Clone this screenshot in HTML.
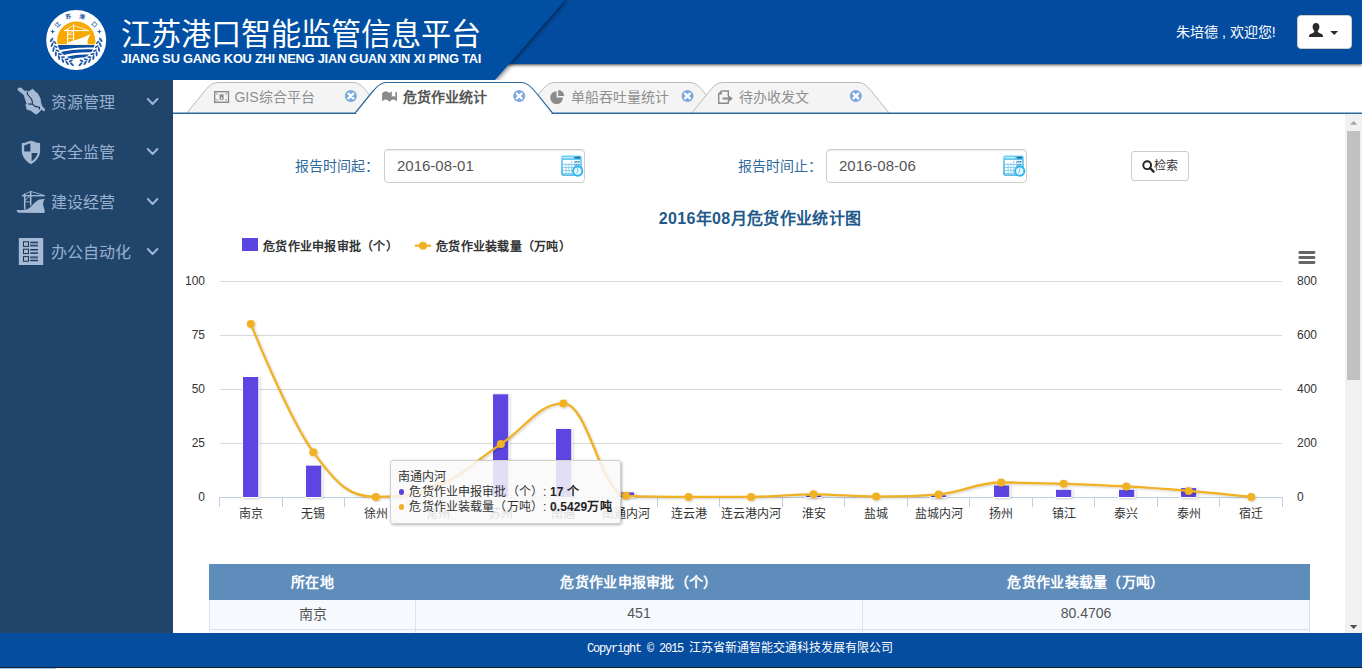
<!DOCTYPE html>
<html lang="zh-CN">
<head>
<meta charset="utf-8">
<title>江苏港口智能监管信息平台</title>
<style>
*{box-sizing:border-box;margin:0;padding:0}
html,body{width:1362px;height:669px;overflow:hidden;background:#fff;font-family:"Liberation Sans",sans-serif;font-size:14px;color:#333}
.abs{position:absolute}
#hdr-r{position:absolute;left:0;top:0;width:1362px;height:64px;background:#034c9f;box-shadow:0 1px 3px rgba(0,0,0,.75)}
#hdr-l{position:absolute;left:0;top:0;width:580px;height:80px}
#title{position:absolute;left:121px;top:14.500px;font-size:30.200px;line-height:40px;color:#fff;white-space:nowrap;letter-spacing:0}
#sub{position:absolute;left:121px;top:50.500px;font-size:12.800px;letter-spacing:-.22px;line-height:15px;font-weight:bold;color:#fff;white-space:nowrap;width:360px}
#user{position:absolute;left:1176px;top:22px;line-height:20px;font-size:14px;color:#fff;white-space:nowrap}
#ubtn{position:absolute;left:1297px;top:15px;width:55px;height:34px;background:#fff;border-radius:4px;border:1px solid #ccc}
#sidetxt{position:absolute;left:0;top:80px;width:173px;height:220px}
#side{position:absolute;left:0;top:80px;width:173px;height:553px;background:#20446a}
.mi{position:absolute;left:0;width:173px;height:50px;color:#98b0ce;font-size:16px;line-height:50px}
.mi span{position:absolute;left:51px;top:0;white-space:nowrap}
.mi svg{position:absolute}
#foot{position:absolute;left:0;top:633px;width:1362px;height:34px;background:#054d9f;color:#fff;font-size:12px;line-height:32.5px;text-align:left;padding-left:587px;font-family:"Liberation Mono",monospace;white-space:nowrap}
#foot span{letter-spacing:-1.2px;white-space:pre}
#strip{position:absolute;left:0;top:667px;width:1362px;height:2px;background:#f2f5f8;border-top:1px solid #17222e}
#strip i{position:absolute;left:0;top:0;width:56px;height:1px;background:#9cc4e4}
#sb{position:absolute;left:1345px;top:114px;width:17px;height:519px;background:#f1f1f1}
#sb .th{position:absolute;left:2px;top:17px;width:13px;height:249px;background:#c1c1c1}

#tabs{position:absolute;left:173px;top:76px;width:1189px;height:44px}
.tt{position:absolute;top:87px;height:20px;line-height:20px;font-size:14px;color:#8f8f8f;white-space:nowrap}
.tt.on{color:#555;font-weight:bold}
.lab{position:absolute;top:156px;height:20px;line-height:20px;font-size:14px;color:#2f6a9c;white-space:nowrap;text-align:right;width:90px}
.inp{position:absolute;top:149px;width:201px;height:34px;border:1px solid #ccc;border-radius:4px;background:#fff;box-shadow:inset 0 1px 1px rgba(0,0,0,.075);font-size:15px;color:#555;line-height:32px;padding-left:12px}
#sbtn{position:absolute;left:1131px;top:151px;width:58px;height:30px;border:1px solid #ccc;border-radius:3px;background:#fff;font-size:12px;color:#333;line-height:28px}
#sbtn span{position:absolute;left:22px;top:0}
#ctitle{letter-spacing:.35px;position:absolute;left:560px;width:400px;top:207.5px;height:22px;line-height:22px;text-align:center;font-size:16px;font-weight:bold;color:#1f5a8a;white-space:nowrap}
.lg{position:absolute;top:238.500px;letter-spacing:.25px;height:16px;line-height:16px;font-size:12px;font-weight:bold;color:#333;white-space:nowrap}
.yl{position:absolute;width:30px;height:14px;line-height:14px;font-size:12px;color:#333;text-align:right;left:175px}
.yr{position:absolute;width:30px;height:14px;line-height:14px;font-size:12px;color:#333;text-align:left;left:1297px}
.xl{position:absolute;top:506px;width:64px;height:16px;line-height:16px;font-size:12px;color:#333;text-align:center;white-space:nowrap}
#chart{position:absolute;left:173px;top:230px;width:1172px;height:300px}
#tip{letter-spacing:.14px;position:absolute;left:389.5px;top:460.3px;width:231.5px;height:63.4px;background:rgba(249,249,249,.85);border:1px solid #d0d0d0;border-radius:3px;box-shadow:1px 1px 3px rgba(0,0,0,.3);font-size:12px;line-height:15px;color:#333;padding:8.7px 0 0 7.5px;white-space:nowrap}
#tip b{color:#222}
#tip i{display:inline-block;width:5.4px;height:5.4px;border-radius:50%;vertical-align:middle;margin:0 5px 2px 1px}
#tbl{position:absolute;left:209px;top:564px;width:1100px;border-collapse:collapse;table-layout:fixed;font-size:14px}
#tbl th{background:#5f8dbb;border:1px solid #5f8dbb;color:#fff;font-weight:bold;height:35px;text-align:center;padding:0 0 3px 0;letter-spacing:.3px}
#tbl td{background:#f6f9fd;color:#555;height:30px;text-align:center;border:1px solid #d9e3ee;padding:0 0 3px 0}
</style>
</head>
<body>
<div id="hdr-r"></div>
<svg id="hdr-l" viewBox="0 0 580 80">
 <defs><filter id="dsh" x="-5%" y="-20%" width="115%" height="140%"><feDropShadow dx="2.5" dy="0" stdDeviation="2" flood-color="#000" flood-opacity=".5"/></filter><linearGradient id="dg" x1="0" y1="0" x2="1" y2="0"><stop offset="0" stop-color="#000" stop-opacity=".35"/><stop offset="1" stop-color="#000" stop-opacity="0"/></linearGradient></defs>
 <polygon points="0,0 565,0 495,80 0,80" fill="#054fa3" filter="url(#dsh)"/>
</svg>
<svg id="logo" class="abs" style="left:40px;top:4px" width="72" height="72" viewBox="40 4 72 72">
 <defs><clipPath id="sun"><rect x="50" y="15" width="52" height="29.2"/></clipPath><clipPath id="sea"><circle cx="76.2" cy="40.5" r="19"/></clipPath></defs>
 <circle cx="76.2" cy="40" r="30" fill="#fff"/>
 <circle cx="76.2" cy="40.500" r="19" fill="#f8a900" clip-path="url(#sun)"/>
 <path d="M66,44.300 L67.700,42.400 C75,40.800 84,37.500 91,33.800 C88.500,36.800 87.300,40.500 87.600,44.300 Z" fill="#fff"/>
 <circle cx="91.600" cy="41.600" r="3.800" fill="#f8a900" clip-path="url(#sun)"/>
 <g stroke="#fff" fill="none" stroke-linecap="square"><path d="M67.700,29 V42.400 M73.600,25 V41" stroke-width="1.100"/><path d="M64.400,30.600 H88.400" stroke-width="1"/><path d="M73.600,25.400 L88,30.400 M73.600,25.400 L65,30.400 M67.700,34.500 H73.600 M67.700,38.300 H73.600 M67.900,34.300 L73.400,30.800" stroke-width=".7"/></g>
 <g clip-path="url(#sea)" fill="#0b4ea2"><path d="M56,45 H97 V47.600 C88,47.200 72,47.600 59,50.200 L56,49Z"/><path d="M59.500,52.300 C70,49.500 84,48.800 95,49.600 L93.500,52.400 C84,51.800 72,52.600 62,55.600Z"/><path d="M64.500,57.600 C72,54.800 82,54.200 91.500,54.800 L89,57.400 C82,57 74,57.800 68.500,60.300Z"/><path d="M73,61.400 C77,59.800 81,59.400 86,59.400 L82,61.600 C79,61.600 77.500,62 75.500,62.800Z"/></g>
 <g fill="#1d57a8"><ellipse cx="71.9" cy="64.2" rx="2.6" ry="1" transform="rotate(225 71.9 64.2)"/><ellipse cx="70.8" cy="60.9" rx="2.2" ry=".9" transform="rotate(155 70.8 60.9)"/><ellipse cx="67.2" cy="62.9" rx="2.6" ry="1" transform="rotate(236 67.2 62.9)"/><ellipse cx="66.7" cy="59.4" rx="2.2" ry=".9" transform="rotate(166 66.7 59.4)"/><ellipse cx="62.8" cy="60.6" rx="2.6" ry="1" transform="rotate(248 62.8 60.6)"/><ellipse cx="63.0" cy="57.1" rx="2.2" ry=".9" transform="rotate(178 63.0 57.1)"/><ellipse cx="59.0" cy="57.5" rx="2.6" ry="1" transform="rotate(260 59.0 57.5)"/><ellipse cx="59.9" cy="54.1" rx="2.2" ry=".9" transform="rotate(190 59.9 54.1)"/><ellipse cx="55.8" cy="53.8" rx="2.6" ry="1" transform="rotate(271 55.8 53.8)"/><ellipse cx="57.4" cy="50.6" rx="2.2" ry=".9" transform="rotate(201 57.4 50.6)"/><ellipse cx="53.5" cy="49.4" rx="2.6" ry="1" transform="rotate(282 53.5 49.4)"/><ellipse cx="55.6" cy="46.6" rx="2.2" ry=".9" transform="rotate(212 55.6 46.6)"/><ellipse cx="52.1" cy="44.7" rx="2.6" ry="1" transform="rotate(294 52.1 44.7)"/><ellipse cx="54.7" cy="42.4" rx="2.2" ry=".9" transform="rotate(224 54.7 42.4)"/><ellipse cx="51.6" cy="39.8" rx="2.6" ry="1" transform="rotate(306 51.6 39.8)"/><ellipse cx="80.5" cy="64.2" rx="2.6" ry="1" transform="rotate(-45 80.5 64.2)"/><ellipse cx="81.6" cy="60.9" rx="2.2" ry=".9" transform="rotate(25 81.6 60.9)"/><ellipse cx="85.2" cy="62.9" rx="2.6" ry="1" transform="rotate(-56 85.2 62.9)"/><ellipse cx="85.7" cy="59.4" rx="2.2" ry=".9" transform="rotate(14 85.7 59.4)"/><ellipse cx="89.6" cy="60.6" rx="2.6" ry="1" transform="rotate(-68 89.6 60.6)"/><ellipse cx="89.4" cy="57.1" rx="2.2" ry=".9" transform="rotate(2 89.4 57.1)"/><ellipse cx="93.4" cy="57.5" rx="2.6" ry="1" transform="rotate(-80 93.4 57.5)"/><ellipse cx="92.5" cy="54.1" rx="2.2" ry=".9" transform="rotate(-10 92.5 54.1)"/><ellipse cx="96.6" cy="53.8" rx="2.6" ry="1" transform="rotate(-91 96.6 53.8)"/><ellipse cx="95.0" cy="50.6" rx="2.2" ry=".9" transform="rotate(-21 95.0 50.6)"/><ellipse cx="98.9" cy="49.4" rx="2.6" ry="1" transform="rotate(-102 98.9 49.4)"/><ellipse cx="96.8" cy="46.6" rx="2.2" ry=".9" transform="rotate(-32 96.8 46.6)"/><ellipse cx="100.3" cy="44.7" rx="2.6" ry="1" transform="rotate(-114 100.3 44.7)"/><ellipse cx="97.7" cy="42.4" rx="2.2" ry=".9" transform="rotate(-44 97.7 42.4)"/><ellipse cx="100.8" cy="39.8" rx="2.6" ry="1" transform="rotate(-126 100.8 39.8)"/></g>
 <g fill="#1d57a8" font-size="5.500" font-weight="bold" text-anchor="middle" font-family="Liberation Sans, sans-serif"><text transform="translate(59.300,26.300) rotate(-42)">江</text><text transform="translate(69.300,18.500) rotate(-14)">苏</text><text transform="translate(82,18.300) rotate(13)">港</text><text transform="translate(93.200,26) rotate(42)">口</text><polygon points="52.7,29.1 53.3,31.1 55.3,31.7 53.3,32.3 52.7,34.3 52.1,32.3 50.1,31.7 52.1,31.1"/><polygon points="99.3,29.1 99.9,31.1 101.9,31.7 99.9,32.3 99.3,34.3 98.7,32.3 96.7,31.7 98.7,31.1"/></g>
</svg>
<div id="title">江苏港口智能监管信息平台</div>
<div id="sub">JIANG SU GANG KOU ZHI NENG JIAN GUAN XIN XI PING TAI</div>
<div id="user">朱培德 , 欢迎您!</div>
<div id="ubtn"><svg class="abs" style="left:-2.2px;top:-2.2px" width="55" height="34" viewBox="1297 15 55 34"><path d="M1317,23.9 c2.1,0 3.4,1.6 3.4,3.8 c0,1.6 -.6,3.2 -1.6,4 v1.2 c.2,.6 3.2,1.6 4.2,2.4 c.8,.6 1.1,1.6 1.1,2.7 h-14.2 c0,-1.100 .3,-2.100 1.100,-2.700 c1,-.8 4,-1.800 4.200,-2.400 v-1.200 c-1,-.8 -1.600,-2.400 -1.600,-4 c0,-2.200 1.300,-3.800 3.400,-3.800z" fill="#2b2b2b"/><path d="M1331.300,32 h7.800 l-3.900,4z" fill="#2b2b2b"/></svg></div>

<div id="side"></div>
<svg class="abs" style="left:0;top:80px" width="173" height="200" viewBox="0 80 173 200">
 <g fill="none" stroke="#9db5d3" stroke-width="2" stroke-linecap="round" stroke-linejoin="round">
  <path d="M147.8,99 L152.6,104 L157.4,99"/><path d="M147.8,149 L152.6,154 L157.4,149"/><path d="M147.8,199 L152.6,204 L157.4,199"/><path d="M147.8,249 L152.6,254 L157.4,249"/>
 </g>
 <!-- map -->
 <path d="M18,88.3 L21.4,88 L24.2,91.1 L27,91.1 L28.8,91.7 L32.7,89.1 L34.4,91.1 L37.8,93.9 L40.1,98.5 L41,103.6 L41.8,105.9 L44.7,109.3 L44.4,111 L41.3,109.3 L40.1,111 L36.7,114.1 L34.4,113.3 L31,110.4 L27,109.3 L25.9,104.7 L27,103.6 L25.3,99 L24.2,95.1 L21.4,92.8 L18,90 Z" fill="#a5bad4" stroke="#a5bad4" stroke-width=".8" stroke-linejoin="round"/>
 <path d="M27,91.6 L27.6,94.5 L31,98.5 L32.2,100.8 L32.4,104.2 L35,106.4 L39.5,107.3 L39.5,109.6 M28.2,103.9 L32.4,104.2" fill="none" stroke="#16304d" stroke-width="1.1" stroke-linejoin="round"/>
 <!-- shield -->
 <path d="M31,140.8 C34,141.2 37,143.6 40.1,143 L40.1,151 C40.1,157 35.2,162 31,164.2 C26.8,162 21.8,157 21.8,151 L21.8,143 C25,143.6 28,141.2 31,140.8 Z" fill="#a5bad4"/>
 <path d="M24.2,145.6 L30.4,143.3 L30.4,151.6 L24.2,151.6 Z" fill="#20446a"/>
 <path d="M31.6,152.9 L37.7,152.9 C37,156.5 34.4,159.4 31.6,161.3 Z" fill="#20446a"/>
 <!-- ship with crane -->
 <path d="M16.8,210.1 C21,210.2 24,210.2 27,209.3 C30,208.3 32,205.6 33.9,203.6 C35.6,201.8 37.4,200.4 39.5,199.6 C41.3,199 43,198.8 44.7,199 C43.4,201 42.8,203 43.2,204.7 C43.4,207.2 44.6,209.4 44.9,211.5 L44.1,213 L18.5,212.7 L16.8,211.2 Z" fill="#a5bad4"/>
 <g stroke="#a5bad4" fill="none"><path d="M24.7,193.4 V209.6 M30.7,191 V205.6" stroke-width="1.5"/><path d="M21.9,195.7 H44.9" stroke-width="1.3"/><path d="M30.7,191.4 L44.1,195.4 M30.7,191.4 L22.2,195.6 M24.7,201.9 H30.7 M24.7,200.6 L29.6,196.2" stroke-width=".9"/></g>
 <!-- list -->
 <rect x="18.8" y="238" width="24.4" height="27" fill="#a5bad4"/>
 <g fill="none" stroke="#1b3452" stroke-width="1"><rect x="23.5" y="241.8" width="5" height="4.6"/><rect x="23.5" y="249.2" width="5" height="4.4"/><rect x="23.5" y="256.6" width="5" height="4.6"/></g>
 <g fill="#1b3452"><rect x="30.2" y="241.7" width="7.7" height="1.2"/><rect x="30.2" y="245.2" width="7.7" height="1.2"/><rect x="30.2" y="249" width="7.7" height="1.4"/><rect x="30.2" y="252.4" width="7.7" height="1.4"/><rect x="30.2" y="256.5" width="7.7" height="1.2"/><rect x="30.2" y="260" width="7.7" height="1.2"/></g>
 <g fill="#6f88a6"><rect x="30.2" y="243.3" width="7.7" height="1.5"/><rect x="30.2" y="258.1" width="7.7" height="1.5"/></g>
</svg>
<div id="sidetxt">
 <div class="mi" style="top:-2.5px"><span>资源管理</span></div>
 <div class="mi" style="top:47.5px"><span>安全监管</span></div>
 <div class="mi" style="top:97.5px"><span>建设经营</span></div>
 <div class="mi" style="top:147.5px"><span>办公自动化</span></div>
</div>

<svg id="tabs" viewBox="173 76 1189 44">
 <path d="M186.9,113 L203.9,92 C207.9,87 211.9,82.5 217.9,82.5 H353.2 C359.2,82.5 363.2,87 367.2,92 L384.2,113" fill="#f4f4f4" stroke="#b9b9b9" stroke-width="1"/>
 <path d="M523.5,113 L540.5,92 C544.5,87 548.5,82.5 554.5,82.5 H689.8 C695.8,82.5 699.8,87 703.8,92 L720.8,113" fill="#f4f4f4" stroke="#b9b9b9" stroke-width="1"/>
 <path d="M691.8,113 L708.8,92 C712.8,87 716.8,82.5 722.8,82.5 H858.1 C864.1,82.5 868.1,87 872.1,92 L889.1,113" fill="#f4f4f4" stroke="#b9b9b9" stroke-width="1"/>
 <rect x="173" y="112.5" width="1189" height="1.5" fill="#2a6a9f"/>
 <path d="M355.2,113 L372.2,92 C376.2,87 380.2,82.5 386.2,82.5 H521.5 C527.5,82.5 531.5,87 535.5,92 L552.5,113" fill="#fff" stroke="#2a6a9f" stroke-width="1.2"/>
 <rect x="356.4" y="112.4" width="194.9" height="2" fill="#fff"/>
 <circle cx="350.9" cy="96" r="6" fill="#7ba8de"/><path d="M348.5,93.6 L353.29999999999995,98.4 M353.29999999999995,93.6 L348.5,98.4" stroke="#fff" stroke-width="2.2" stroke-linecap="round" fill="none"/>
 <circle cx="519.2" cy="96" r="6" fill="#7ba8de"/><path d="M516.8000000000001,93.6 L521.6,98.4 M521.6,93.6 L516.8000000000001,98.4" stroke="#fff" stroke-width="2.2" stroke-linecap="round" fill="none"/>
 <circle cx="687.5" cy="96" r="6" fill="#7ba8de"/><path d="M685.1,93.6 L689.9,98.4 M689.9,93.6 L685.1,98.4" stroke="#fff" stroke-width="2.2" stroke-linecap="round" fill="none"/>
 <circle cx="855.8" cy="96" r="6" fill="#7ba8de"/><path d="M853.4,93.6 L858.1999999999999,98.4 M858.1999999999999,93.6 L853.4,98.4" stroke="#fff" stroke-width="2.2" stroke-linecap="round" fill="none"/>
 <g fill="none" stroke="#8a8a8a"><rect x="214.7" y="91.7" width="13.8" height="10.6" stroke-width="1.4"/></g>
 <rect x="219.6" y="94.3" width="4" height="5.4" fill="#8a8a8a"/><rect x="221" y="97.3" width="1.3" height="1.5" fill="#fff"/>
 <g fill="#9a9a9a"><rect x="216.3" y="93.3" width="1.5" height="1.3"/><rect x="225.4" y="93.3" width="1.5" height="1.3"/><rect x="216.3" y="99.4" width="1.5" height="1.3"/><rect x="225.4" y="99.4" width="1.5" height="1.3"/></g>
 <path d="M382.1,93.3 Q385.7,89.4 389.5,93 L389.5,101.8 Q385.7,97.4 382.1,101.4 Z M389.5,93 L391.8,91.2 L391.8,96.8 L393.6,95.9 L395.4,96.8 L395.4,91.2 L397,92.6 L397,101.4 Q393.3,97.4 389.5,101.8 Z" fill="#8a8a8a"/>
 <path d="M556.6,97.6 V91.2 A6.4,6.4 0 1 0 563,97.6 Z" fill="#8a8a8a"/><path d="M558.2,96 V90 A6,6 0 0 1 564.2,96 Z" fill="#8a8a8a"/>
 <path d="M721.6,91 H728.3 V96.2 M728.3,100.6 V103.2 H718.7 V94 L721.6,91" fill="none" stroke="#8a8a8a" stroke-width="1.4"/><path d="M718.4,94.4 h3.4 v-3.6z" fill="#8a8a8a"/><path d="M722.6,97.6 h5.6 v-2.6 l4.6,3.6 -4.6,3.6 v-2.6 h-5.6z" fill="#8a8a8a"/>
</svg>
<div class="tt" style="left:234.4px">GIS综合平台</div>
<div class="tt on" style="left:402.7px">危货作业统计</div>
<div class="tt" style="left:571.0px">单船吞吐量统计</div>
<div class="tt" style="left:739.3px">待办收发文</div>

<div class="lab" style="left:289px">报告时间起：</div>
<div class="inp" style="left:384px">2016-08-01</div>
<div class="lab" style="left:732px">报告时间止：</div>
<div class="inp" style="left:826px">2016-08-06</div>
<svg class="abs" style="left:560.0px;top:154px" width="25" height="25" viewBox="560 154 25 25">
 <defs><linearGradient id="cg561" x1="0" y1="0" x2="0" y2="1"><stop offset="0" stop-color="#6fd0f5"/><stop offset="1" stop-color="#2aa6e2"/></linearGradient></defs>
 <rect x="561.2" y="155.600" width="20.600" height="20.200" rx="2" fill="url(#cg561)"/>
 <rect x="562.600" y="157" width="10.500" height="1.300" fill="#bfeaf9"/><rect x="574.600" y="156.800" width="5.800" height="1.700" rx=".8" fill="#14699e"/>
 <rect x="562.800" y="160" width="17.400" height="14.400" fill="#fff"/>
 <g fill="#8fd0ee"><rect x="562.800" y="164" width="17.400" height="1"/><rect x="562.800" y="167" width="17.400" height="1"/><rect x="562.800" y="170" width="17.400" height="1"/><rect x="562.800" y="173" width="17.400" height="1"/><rect x="565.600" y="163" width="1" height="11.400"/><rect x="568.400" y="163" width="1" height="11.400"/><rect x="571.200" y="160.800" width="1" height="13.600"/><rect x="574" y="160.800" width="1" height="13.600"/><rect x="576.800" y="160.800" width="1" height="13.600"/></g>
 <g fill="#2a86c4"><rect x="575.200" y="161" width="1.600" height="1.600"/><rect x="577.900" y="161" width="1.600" height="1.600"/><rect x="575.200" y="164.200" width="1.600" height="1.400"/><rect x="577.900" y="164.200" width="1.600" height="1.400"/></g>
 <circle cx="577.700" cy="171.100" r="5.600" fill="#2fb4ee"/><circle cx="577.700" cy="171.100" r="3.700" fill="#e6f6fd"/><path d="M577.700,168.300 V171.300 L576.300,173" stroke="#4dbdf0" stroke-width=".9" fill="none"/>
</svg>
<svg class="abs" style="left:1002.2px;top:154px" width="25" height="25" viewBox="560 154 25 25">
 <defs><linearGradient id="cg1003" x1="0" y1="0" x2="0" y2="1"><stop offset="0" stop-color="#6fd0f5"/><stop offset="1" stop-color="#2aa6e2"/></linearGradient></defs>
 <rect x="561.2" y="155.600" width="20.600" height="20.200" rx="2" fill="url(#cg1003)"/>
 <rect x="562.600" y="157" width="10.500" height="1.300" fill="#bfeaf9"/><rect x="574.600" y="156.800" width="5.800" height="1.700" rx=".8" fill="#14699e"/>
 <rect x="562.800" y="160" width="17.400" height="14.400" fill="#fff"/>
 <g fill="#8fd0ee"><rect x="562.800" y="164" width="17.400" height="1"/><rect x="562.800" y="167" width="17.400" height="1"/><rect x="562.800" y="170" width="17.400" height="1"/><rect x="562.800" y="173" width="17.400" height="1"/><rect x="565.600" y="163" width="1" height="11.400"/><rect x="568.400" y="163" width="1" height="11.400"/><rect x="571.200" y="160.800" width="1" height="13.600"/><rect x="574" y="160.800" width="1" height="13.600"/><rect x="576.800" y="160.800" width="1" height="13.600"/></g>
 <g fill="#2a86c4"><rect x="575.200" y="161" width="1.600" height="1.600"/><rect x="577.900" y="161" width="1.600" height="1.600"/><rect x="575.200" y="164.200" width="1.600" height="1.400"/><rect x="577.900" y="164.200" width="1.600" height="1.400"/></g>
 <circle cx="577.700" cy="171.100" r="5.600" fill="#2fb4ee"/><circle cx="577.700" cy="171.100" r="3.700" fill="#e6f6fd"/><path d="M577.700,168.300 V171.300 L576.300,173" stroke="#4dbdf0" stroke-width=".9" fill="none"/>
</svg>
<div id="sbtn"><svg class="abs" style="left:10px;top:8px" width="13" height="13" viewBox="0 0 13 13"><circle cx="5.2" cy="5.2" r="3.9" fill="none" stroke="#222" stroke-width="1.9"/><path d="M8,8 L11.6,11.6" stroke="#222" stroke-width="2.3" stroke-linecap="round"/></svg><span>检索</span></div>
<div id="ctitle">2016年08月危货作业统计图</div>
<!--CHART-START-->
<svg id="chart" viewBox="173 230 1172 300">
 <defs><filter id="sh" x="-5%" y="-20%" width="110%" height="140%"><feDropShadow dx="1" dy="1" stdDeviation="0.9" flood-color="#000" flood-opacity=".2"/></filter></defs>
 <rect x="220" y="281" width="1062" height="1" fill="#d8d8d8"/>
 <rect x="220" y="335" width="1062" height="1" fill="#d8d8d8"/>
 <rect x="220" y="389" width="1062" height="1" fill="#d8d8d8"/>
 <rect x="220" y="443" width="1062" height="1" fill="#d8d8d8"/>
 <rect x="219" y="497" width="1064" height="1" fill="#c0d0e0"/>
 <rect x="219" y="497" width="1" height="10" fill="#c0d0e0"/>
 <rect x="282" y="497" width="1" height="10" fill="#c0d0e0"/>
 <rect x="344" y="497" width="1" height="10" fill="#c0d0e0"/>
 <rect x="407" y="497" width="1" height="10" fill="#c0d0e0"/>
 <rect x="469" y="497" width="1" height="10" fill="#c0d0e0"/>
 <rect x="532" y="497" width="1" height="10" fill="#c0d0e0"/>
 <rect x="594" y="497" width="1" height="10" fill="#c0d0e0"/>
 <rect x="657" y="497" width="1" height="10" fill="#c0d0e0"/>
 <rect x="719" y="497" width="1" height="10" fill="#c0d0e0"/>
 <rect x="782" y="497" width="1" height="10" fill="#c0d0e0"/>
 <rect x="844" y="497" width="1" height="10" fill="#c0d0e0"/>
 <rect x="907" y="497" width="1" height="10" fill="#c0d0e0"/>
 <rect x="969" y="497" width="1" height="10" fill="#c0d0e0"/>
 <rect x="1032" y="497" width="1" height="10" fill="#c0d0e0"/>
 <rect x="1094" y="497" width="1" height="10" fill="#c0d0e0"/>
 <rect x="1157" y="497" width="1" height="10" fill="#c0d0e0"/>
 <rect x="1219" y="497" width="1" height="10" fill="#c0d0e0"/>
 <rect x="1282" y="497" width="1" height="10" fill="#c0d0e0"/>
 <g filter="url(#sh)">
  <rect x="242.5" y="376.5" width="16.3" height="121.0" fill="#5b45e0" stroke="#fff" stroke-width="1"/>
  <rect x="305.5" y="465.1" width="16.3" height="32.4" fill="#5b45e0" stroke="#fff" stroke-width="1"/>
  <rect x="492.5" y="393.8" width="16.3" height="103.7" fill="#5b45e0" stroke="#fff" stroke-width="1"/>
  <rect x="555.5" y="428.4" width="16.3" height="69.1" fill="#5b45e0" stroke="#fff" stroke-width="1"/>
  <rect x="618.5" y="491.9" width="16.3" height="5.6" fill="#5b45e0" stroke="#fff" stroke-width="1"/>
  <rect x="805.5" y="494.9" width="16.3" height="2.6" fill="#5b45e0" stroke="#fff" stroke-width="1"/>
  <rect x="930.5" y="494.9" width="16.3" height="2.6" fill="#5b45e0" stroke="#fff" stroke-width="1"/>
  <rect x="993.5" y="485.0" width="16.3" height="12.5" fill="#5b45e0" stroke="#fff" stroke-width="1"/>
  <rect x="1055.5" y="489.3" width="16.3" height="8.2" fill="#5b45e0" stroke="#fff" stroke-width="1"/>
  <rect x="1118.5" y="489.3" width="16.3" height="8.2" fill="#5b45e0" stroke="#fff" stroke-width="1"/>
  <rect x="1180.5" y="487.6" width="16.3" height="9.9" fill="#5b45e0" stroke="#fff" stroke-width="1"/>
 </g>
 <g filter="url(#sh)"><path d="M250.8,323.9 C250.8,323.9 288.3,417.6 313.3,452.2 C338.3,486.8 350.8,496.9 375.8,496.9 C400.8,496.9 413.3,496.2 438.4,485.6 C463.4,475.0 475.9,460.5 500.9,444.1 C525.9,427.7 538.4,403.4 563.4,403.4 C588.4,403.4 600.9,494.7 625.9,495.8 C651.0,496.9 663.5,496.9 688.5,496.9 C713.5,496.9 726.0,496.9 751.0,496.9 C776.0,496.9 788.5,494.3 813.5,494.3 C838.5,494.3 851.0,496.6 876.1,496.6 C901.1,496.6 913.6,496.6 938.6,494.4 C963.6,492.2 976.1,482.5 1001.1,482.5 C1026.1,482.5 1038.6,483.0 1063.6,483.8 C1088.7,484.6 1101.2,485.0 1126.2,486.4 C1151.2,487.8 1163.7,488.8 1188.7,490.9 C1213.7,493.0 1251.2,496.9 1251.2,496.9" fill="none" stroke="#f0b124" stroke-width="2.3" stroke-linejoin="round" stroke-linecap="round"/>
  <circle cx="250.8" cy="323.9" r="4" fill="#f0b124"/>
  <circle cx="313.3" cy="452.2" r="4" fill="#f0b124"/>
  <circle cx="375.8" cy="496.9" r="4" fill="#f0b124"/>
  <circle cx="438.4" cy="485.6" r="4" fill="#f0b124"/>
  <circle cx="500.9" cy="444.1" r="4" fill="#f0b124"/>
  <circle cx="563.4" cy="403.4" r="4" fill="#f0b124"/>
  <circle cx="625.9" cy="495.8" r="4" fill="#f0b124"/>
  <circle cx="688.5" cy="496.9" r="4" fill="#f0b124"/>
  <circle cx="751.0" cy="496.9" r="4" fill="#f0b124"/>
  <circle cx="813.5" cy="494.3" r="4" fill="#f0b124"/>
  <circle cx="876.1" cy="496.6" r="4" fill="#f0b124"/>
  <circle cx="938.6" cy="494.4" r="4" fill="#f0b124"/>
  <circle cx="1001.1" cy="482.5" r="4" fill="#f0b124"/>
  <circle cx="1063.6" cy="483.8" r="4" fill="#f0b124"/>
  <circle cx="1126.2" cy="486.4" r="4" fill="#f0b124"/>
  <circle cx="1188.7" cy="490.9" r="4" fill="#f0b124"/>
  <circle cx="1251.2" cy="496.9" r="4" fill="#f0b124"/>
 </g>
 <rect x="242" y="238" width="16" height="13" fill="#5b45e0"/>
 <path d="M415,245.7 H431" stroke="#f0b124" stroke-width="2.2"/><circle cx="423" cy="245.7" r="4" fill="#f0b124"/>
 <g fill="#666"><rect x="1298.4" y="251.1" width="17" height="2.8" rx="1.3"/><rect x="1298.4" y="256.1" width="17" height="2.8" rx="1.3"/><rect x="1298.4" y="261.1" width="17" height="2.8" rx="1.3"/></g>
</svg>
<div class="lg" style="left:263px">危货作业申报审批（个）</div>
<div class="lg" style="left:436px">危货作业装载量（万吨）</div>
<div class="yl" style="top:274.0px">100</div><div class="yr" style="top:274.0px">800</div>
<div class="yl" style="top:328.0px">75</div><div class="yr" style="top:328.0px">600</div>
<div class="yl" style="top:382.0px">50</div><div class="yr" style="top:382.0px">400</div>
<div class="yl" style="top:436.0px">25</div><div class="yr" style="top:436.0px">200</div>
<div class="yl" style="top:490.0px">0</div><div class="yr" style="top:490.0px">0</div>
<div class="xl" style="left:218.8px">南京</div>
<div class="xl" style="left:281.3px">无锡</div>
<div class="xl" style="left:343.8px">徐州</div>
<div class="xl" style="left:406.4px">常州</div>
<div class="xl" style="left:468.9px">苏州</div>
<div class="xl" style="left:531.4px">南通</div>
<div class="xl" style="left:593.9px">南通内河</div>
<div class="xl" style="left:656.5px">连云港</div>
<div class="xl" style="left:719.0px">连云港内河</div>
<div class="xl" style="left:781.5px">淮安</div>
<div class="xl" style="left:844.1px">盐城</div>
<div class="xl" style="left:906.6px">盐城内河</div>
<div class="xl" style="left:969.1px">扬州</div>
<div class="xl" style="left:1031.6px">镇江</div>
<div class="xl" style="left:1094.2px">泰兴</div>
<div class="xl" style="left:1156.7px">泰州</div>
<div class="xl" style="left:1219.2px">宿迁</div>
<div id="tip">南通内河<br><i style="background:#5b45e0"></i>危货作业申报审批（个）: <b>17 个</b><br><i style="background:#f0b124"></i>危货作业装载量（万吨）: <b>0.5429万吨</b></div>
<!--CHART-END-->
<table id="tbl"><colgroup><col style="width:206px"><col style="width:447px"><col style="width:447px"></colgroup>
<tr><th>所在地</th><th>危货作业申报审批（个）</th><th>危货作业装载量（万吨）</th></tr>
<tr><td>南京</td><td>451</td><td>80.4706</td></tr>
<tr><td>无锡</td><td>121</td><td>20.1325</td></tr>
</table>



<div id="sb"><div class="th"></div><svg class="abs" style="left:0;top:0" width="17" height="519" viewBox="1345 114 17 519"><path d="M1349.900,124.800 h7.400 l-3.700,-3.900z" fill="#a3a3a3"/><path d="M1349.900,625 h7.400 l-3.700,3.900z" fill="#505050"/></svg></div>
<div id="foot"><span>Copyright © 2015 </span>江苏省新通智能交通科技发展有限公司</div>
<div id="strip"><i></i></div>
</body>
</html>
